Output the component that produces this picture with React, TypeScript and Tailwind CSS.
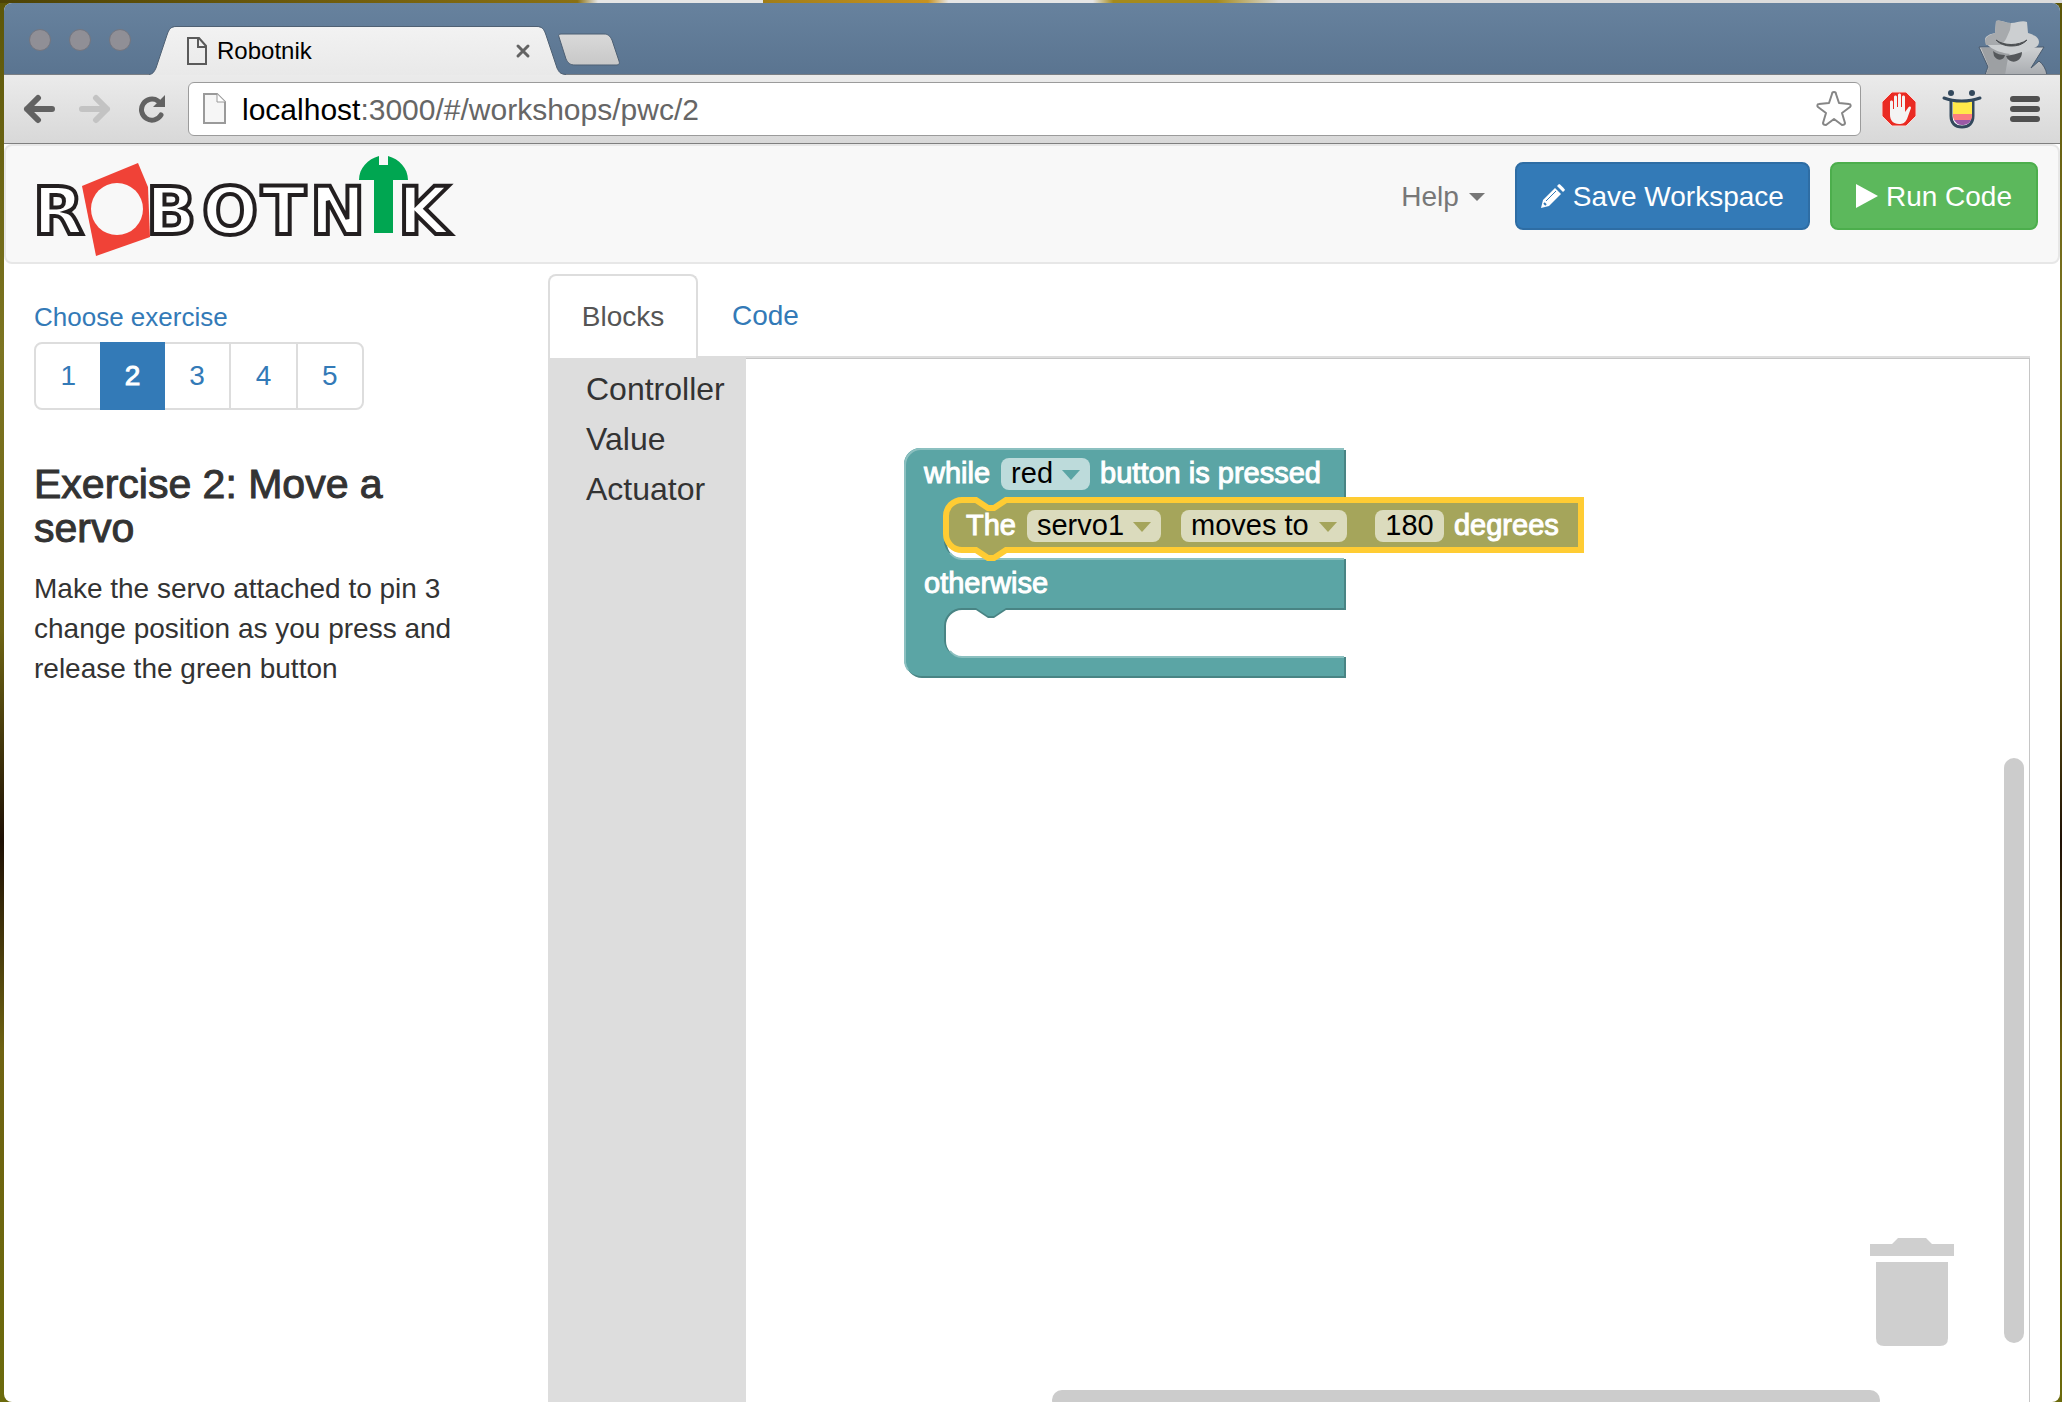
import type { ReactNode } from "react";

const categories = ["Controller", "Value", "Actuator"];
const exercises = [1, 2, 3, 4, 5];

function TabStrip() {
  return (
    <div className="relative flex h-[72px] shrink-0 items-end bg-gradient-to-b from-[#67829e] to-[#5a7490] pl-[25px]">
      <div className="absolute inset-x-0 bottom-0 h-px bg-[#7a7f85]" />
      <div className="flex gap-[18px] self-start pt-[26px]">
        {["Close", "Minimize", "Zoom"].map((name) => (
          <button
            key={name}
            aria-label={name}
            className="size-[22px] rounded-full border border-[#73757f] bg-[#908f96]"
          />
        ))}
      </div>
      <div className="relative ml-[18px] flex h-[49px] w-[418px] items-center pl-[38px] pr-9">
        <svg className="absolute inset-0" width="418" height="49" viewBox="0 0 418 49">
          <defs>
            <linearGradient id="tab" x1="0" y1="0" x2="0" y2="1">
              <stop offset="0" stopColor="#f2f2f2" />
              <stop offset="1" stopColor="#e9e9e9" />
            </linearGradient>
          </defs>
          <path
            d="M0 49C4 48 5 46 7 42L18 9C20 3 22 1 27 1H388C393 1 395 3 397 9L408 42C410 46 411 48 417 49Z"
            fill="url(#tab)"
          />
          <path
            d="M0 48.500C4 48 5 46 7 42L18 9C20 3 22 .5 27 .5H388C393 .5 395 3 397 9L408 42C410 46 411 48 417 48.500"
            fill="none"
            stroke="#4f6073"
          />
        </svg>
        <svg className="relative" width="20" height="28" viewBox="0 0 20 28" fill="none" stroke="#5a5a5a" strokeWidth="2">
          <path d="M1 1H12L19 9V27H1Z" />
          <path d="M11 1V10H19" />
        </svg>
        <span className="relative ml-[10px] flex-1 text-2xl leading-7 text-black">Robotnik</span>
        <button aria-label="Close tab" className="relative">
          <svg width="16" height="16" viewBox="0 0 16 16" stroke="#636363" strokeWidth="3" strokeLinecap="round">
            <path d="M3 3L13 13M13 3L3 13" />
          </svg>
        </button>
      </div>
      <button aria-label="New tab" className="relative -ml-[9px] mb-[9px]">
        <svg width="63" height="33" viewBox="0 0 63 33">
          <defs>
            <linearGradient id="newtab" x1="0" y1="0" x2="0" y2="1">
              <stop offset="0" stopColor="#d9d9d9" />
              <stop offset="1" stopColor="#c8c8c8" />
            </linearGradient>
          </defs>
          <path
            d="M3 1H46C50 1 52 3 54 7L61 28C62 30 61 32 59 32H17C12 32 10 30 8 26L1 4C0 2 1 1 3 1Z"
            fill="url(#newtab)"
            stroke="#4d5f73"
          />
        </svg>
      </button>
      <svg className="ml-auto mr-[12px]" width="70" height="57" viewBox="0 0 70 57">
        <defs>
          <linearGradient id="coat" x1="0" y1="0" x2="0" y2="1">
            <stop offset="0" stopColor="#cfd1d3" />
            <stop offset="1" stopColor="#a9acb0" />
          </linearGradient>
        </defs>
        <path
          d="M1 29L10 29L56 29L66 29L53 50L61 43C65 46 68 51 69 57H7C8 54 9 51 10 49Z"
          fill="url(#coat)"
          stroke="#4a5a6c"
        />
        <path d="M3 30H34L30 40L27 57H8L11 49Z" fill="#9da0a3" />
        <path
          d="M18 3C22 1 27 5 33 5C39 5 44 2 49 4L50 15C56 17 61 19 61 24C61 27 59 29 56 30C50 34 43 36 35 36C24 36 8 30 7 22C7 18 12 16 17 15Z"
          fill="#cccfd1"
        />
        <path d="M18 3C22 1 27 5 33 5L32 12L28 21L24 27L8 27C6 22 7 18 17 15Z" fill="#a7aaad" />
        <path d="M18 22C26 28 40 28 49 22C44 27 39 28 33 28C27 28 22 26 18 22Z" fill="#4c4f52" stroke="#4c4f52" />
        <path d="M15 33C19 36 23 37 27 37C26 43 19 43 16 38ZM28 38C33 37 39 36 44 34C44 45 31 47 28 38Z" fill="#55585b" />
      </svg>
    </div>
  );
}

function Toolbar() {
  return (
    <div className="flex h-[69px] shrink-0 items-center border-b border-[#7f7f7f] bg-gradient-to-b from-[#ebebeb] to-[#d8d8d8] pb-px pl-[18px] pr-5">
      <button aria-label="Back">
        <svg width="34" height="30" viewBox="0 0 34 30" fill="none" stroke="#626262" strokeWidth="6" strokeLinecap="round" strokeLinejoin="round">
          <path d="M5 15H30M16 4L5 15L16 26" />
        </svg>
      </button>
      <button aria-label="Forward" className="ml-[22px]">
        <svg width="34" height="30" viewBox="0 0 34 30" fill="none" stroke="#c3c3c3" strokeWidth="6" strokeLinecap="round" strokeLinejoin="round">
          <path d="M4 15H29M18 4L29 15L18 26" />
        </svg>
      </button>
      <button aria-label="Reload" className="ml-[26px]">
        <svg width="28" height="28" viewBox="0 0 28 28">
          <path d="M23 20A10.500 10.500 0 1 1 20 6" fill="none" stroke="#626262" strokeWidth="5" strokeLinecap="round" />
          <path d="M27 0V12H15Z" fill="#626262" />
        </svg>
      </button>
      <div className="ml-[22px] flex h-[54px] flex-1 items-center rounded-md border border-[#9b9b9b] bg-white pl-[14px] pr-[7px]">
        <svg width="24" height="32" viewBox="0 0 24 32">
          <path d="M1 1H14L22 9V30H1Z" fill="#f6f6f6" stroke="#9a9a9a" strokeWidth="2" />
          <path d="M14 1V9H22" fill="#fff" stroke="#9a9a9a" />
        </svg>
        <div className="ml-[15px] flex-1 pt-[2px] text-[30px] leading-9 text-[#666]">
          <span className="text-black">localhost</span>:3000/#/workshops/pwc/2
        </div>
        <button aria-label="Bookmark this page">
          <svg width="38" height="38" viewBox="0 0 38 38" fill="#fff" stroke="#868686" strokeWidth="2" strokeLinejoin="round">
            <path d="M19 2C20 2 21 3 21 4L24 13L34 14C36 14 36 16 35 17L27 23L30 33C30 35 28 35 27 35L19 29L11 35C10 35 8 35 8 33L11 23L3 17C2 16 2 14 4 14L14 13L17 4C17 3 18 2 19 2Z" />
          </svg>
        </button>
      </div>
      <button aria-label="Ad blocker" className="ml-5">
        <svg width="36" height="36" viewBox="0 0 36 36">
          <path d="M11 1H25L35 11V25L25 35H11L1 25V11Z" fill="#ea2a22" stroke="#f7d9d6" />
          <path
            d="M9 11C9 9 12 9 12 11V18H13V6C13 4 16 4 16 6V16H17V4C17 2 20 2 20 4V16H21V6C21 4 24 4 24 6V21L27 17C28 15 30 15 30 17L26 28C24 32 22 33 18 33C12 33 9 29 9 24Z"
            fill="#f4f4f4"
          />
        </svg>
      </button>
      <button aria-label="Extension" className="ml-[25px]">
        <svg width="40" height="40" viewBox="0 0 40 40">
          <circle cx="9" cy="4" r="3" fill="#33495d" />
          <circle cx="30" cy="4" r="3" fill="#33495d" />
          <path d="M9 12V27C9 34 13 38 20 38C27 38 31 34 31 27V12" fill="#fff" stroke="#33495d" strokeWidth="3" />
          <path d="M11 13H30V25H11Z" fill="#ffe94a" />
          <path d="M11 25H30V28L29 31H12L11 28Z" fill="#fb7d7f" />
          <path d="M12 31H29C27 35 24 36 20 36C16 36 14 34 12 31Z" fill="#9b59a6" />
          <path d="M2 9C12 13 27 13 38 9" fill="none" stroke="#33495d" strokeWidth="3" strokeLinecap="round" />
        </svg>
      </button>
      <button aria-label="Menu" className="ml-[28px] flex flex-col gap-1">
        <span className="h-[6px] w-[30px] rounded-full bg-[#505050]" />
        <span className="h-[6px] w-[30px] rounded-full bg-[#505050]" />
        <span className="h-[6px] w-[30px] rounded-full bg-[#505050]" />
      </button>
    </div>
  );
}

function Logo() {
  return (
    <svg width="432" height="102" viewBox="-6 0 432 102" role="img" aria-label="Robotnik">
      <path d="M102 8L46 31L60 101L114 82L112 32Z" fill="#f04237" />
      <g
        fill="#fff"
        stroke="#231f20"
        strokeWidth="4"
        fontFamily="'DejaVu Sans', sans-serif"
        fontWeight="700"
        fontSize="66"
      >
        <text x="-3" y="79">R</text>
        <text x="110" y="79">B</text>
        <text x="166" y="79">O</text>
        <text x="225" y="79">T</text>
        <text x="274" y="79">N</text>
        <text x="362" y="79">K</text>
      </g>
      <circle cx="81" cy="54" r="26" fill="#f8f8f8" />
      <path d="M343 1V10H352V1C363 4 372 13 372 25H357V78H338V25H323C323 13 332 4 343 1Z" fill="#00a651" />
    </svg>
  );
}

function Navbar() {
  return (
    <header className="flex h-[120px] shrink-0 items-start rounded-lg border-2 border-[#e7e7e7] bg-[#f8f8f8] pl-6 pr-5 text-[28px] leading-10">
      <a href="#home" className="mt-[9px]">
        <Logo />
      </a>
      <nav className="ml-auto mt-4 flex items-center">
        <button className="mr-[30px] flex items-center gap-[10px] pt-[2px] text-[#777]">
          Help
          <svg width="16" height="8" viewBox="0 0 16 8" fill="#777">
            <path d="M0 0H16L8 8Z" />
          </svg>
        </button>
        <button className="flex h-[68px] items-center gap-2 rounded-lg border-2 border-[#2e6da4] bg-[#337ab7] px-6 text-white">
          <svg width="24" height="24" viewBox="0 0 24 24" fill="#fff">
            <path d="M14 4L20 10L8 22L0 24L2 16Z" />
            <path d="M16 2L18 0C19 0 24 5 24 6L22 8Z" />
            <path d="M5 17L15 7" stroke="#337ab7" />
            <path d="M3 19L5 21" stroke="#337ab7" strokeWidth="2" />
          </svg>
          <span className="pt-[2px]">Save Workspace</span>
        </button>
        <button className="ml-5 flex h-[68px] items-center gap-2 rounded-lg border-2 border-[#4cae4c] bg-[#5cb85c] px-6 text-white">
          <svg width="22" height="24" viewBox="0 0 22 24" fill="#fff">
            <path d="M0 0L22 12L0 24Z" />
          </svg>
          <span className="pt-[2px]">Run Code</span>
        </button>
      </nav>
    </header>
  );
}

function ExercisePanel() {
  return (
    <aside className="w-[544px] shrink-0 pl-[30px] pr-[70px] pt-[33px] text-[28px] leading-10 text-[#333]">
      <h2 className="text-[26px] text-[#337ab7]">Choose exercise</h2>
      <nav aria-label="Exercises" className="mt-[5px] flex w-[330px] text-[#337ab7]">
        {exercises.map((n) =>
          n === 2 ? (
            <a
              key={n}
              href={`#exercise-${n}`}
              aria-current="page"
              className="relative -ml-[2px] flex h-[68px] flex-1 items-center justify-center bg-[#337ab7] text-white [-webkit-text-stroke:1px_#fff]"
            >
              {n}
            </a>
          ) : (
            <a
              key={n}
              href={`#exercise-${n}`}
              className="-ml-[2px] flex h-[68px] flex-1 items-center justify-center border-2 border-[#ddd] bg-white first:ml-0 first:rounded-l-lg last:rounded-r-lg"
            >
              {n}
            </a>
          ),
        )}
      </nav>
      <h1 className="mt-[52px] text-[41px] leading-[44px] [-webkit-text-stroke:1px_#333]">Exercise 2: Move a servo</h1>
      <p className="mt-[19px]">Make the servo attached to pin 3 change position as you press and release the green button</p>
    </aside>
  );
}

function Label({ children }: { children: ReactNode }) {
  return <span className="whitespace-nowrap text-white [-webkit-text-stroke:1px_#fff]">{children}</span>;
}

function Caret({ color }: { color: string }) {
  return (
    <svg className="pointer-events-none absolute right-[10px] top-3" width="18" height="10" viewBox="0 0 18 10" fill={color}>
      <path d="M0 0H18L9 10Z" />
    </svg>
  );
}

function Blocks() {
  return (
    <div className="absolute left-[154px] top-[81px] h-[250px] w-[700px] text-[29px] leading-[30px] text-black">
      <svg className="absolute inset-0" width="700" height="250" viewBox="0 0 700 250">
        <path
          d="M6 26a16 16 0 0 1 16-16H446V61H107l-12 8h-6l-12-8h-14a16 16 0 0 0-16 16V103a16 16 0 0 0 16 16H446V170H106l-12 8h-6l-12-8h-14a16 16 0 0 0-16 16V201a16 16 0 0 0 16 16H446V238H22a16 16 0 0 1-16-16Z"
          fill="#498484"
        />
        <path
          d="M4 24a16 16 0 0 1 16-16H444V58H106l-12 8h-6l-12-8h-14a18 18 0 0 0-18 18V102a18 18 0 0 0 18 16H444V168H106l-12 8h-6l-12-8h-14a18 18 0 0 0-18 18V201a18 18 0 0 0 18 16H444V236H22a17 17 0 0 1-18-16Z"
          fill="#5ba5a5"
        />
        <path
          d="M8 230A16 16 0 0 1 5 222V25A16 16 0 0 1 21 9H444M50 113A16 16 0 0 0 62 119H444M50 211A16 16 0 0 0 62 217H444"
          fill="none"
          stroke="#8cc0c0"
          strokeWidth="2"
        />
        <path
          d="M46 76a16 16 0 0 1 16-16h14l12 8h6l12-8H681V110H106l-12 8h-6l-12-8h-14a16 16 0 0 1-16-16Z"
          fill="#a5a55b"
          stroke="#ffcc33"
          strokeWidth="6"
        />
      </svg>
      <div className="absolute left-6 top-[18px] flex items-start gap-[10px]">
        <Label>while</Label>
        <span className="relative ml-px">
          <select
            aria-label="Button colour"
            className="block h-8 w-[89px] appearance-none rounded-lg bg-[#bddbdb] pb-[2px] pl-[10px] leading-[30px]"
          >
            <option>red</option>
          </select>
          <Caret color="#5ba5a5" />
        </span>
        <Label>button is pressed</Label>
      </div>
      <div className="absolute left-[66px] top-[70px] flex items-start gap-[10px]">
        <Label>The</Label>
        <span className="relative ml-px">
          <select
            aria-label="Servo"
            className="block h-8 w-[134px] appearance-none rounded-lg bg-[#dbdbbd] pb-[2px] pl-[10px] leading-[30px]"
          >
            <option>servo1</option>
          </select>
          <Caret color="#a5a55b" />
        </span>
        <span className="relative ml-[10px]">
          <select
            aria-label="Action"
            className="block h-8 w-[166px] appearance-none rounded-lg bg-[#dbdbbd] pb-[2px] pl-[10px] leading-[30px]"
          >
            <option>moves to</option>
          </select>
          <Caret color="#a5a55b" />
        </span>
        <input
          aria-label="Degrees"
          defaultValue="180"
          className="ml-[18px] h-8 w-[69px] rounded-lg bg-[#dbdbbd] pb-[2px] text-center leading-[30px]"
        />
        <Label>degrees</Label>
      </div>
      <div className="absolute left-6 top-[128px]">
        <Label>otherwise</Label>
      </div>
    </div>
  );
}

function Editor() {
  return (
    <section className="flex min-w-0 flex-1 flex-col pr-[30px] pt-[10px]">
      <div role="tablist" className="flex h-[84px] shrink-0 border-b-2 border-[#ddd] text-[28px] leading-10">
        <button
          role="tab"
          aria-selected="true"
          className="relative -mb-[2px] w-[150px] rounded-t-lg border-2 border-b-0 border-[#ddd] bg-white text-[#555]"
        >
          Blocks
        </button>
        <button role="tab" aria-selected="false" className="px-[34px] pt-[2px] text-[#337ab7]">
          Code
        </button>
      </div>
      <div className="flex min-h-0 flex-1">
        <ul className="w-[198px] shrink-0 bg-[#ddd] pt-[6px] text-[32px] leading-[50px] text-[#333]">
          {categories.map((name) => (
            <li key={name}>
              <button className="block pl-[38px]">{name}</button>
            </li>
          ))}
        </ul>
        <div className="relative min-w-0 flex-1 overflow-hidden border-r border-t border-[#c6c6c6] bg-white">
          <Blocks />
          <svg className="absolute bottom-[56px] right-[74px]" width="86" height="110" viewBox="0 0 86 110" fill="#cfcfcf">
            <path d="M1 8H23L29 2H57L63 8H85V20H1Z" />
            <path d="M7 26H79V102Q79 110 71 110H15Q7 110 7 102Z" />
          </svg>
          <div className="absolute bottom-[59px] right-[5px] top-[399px] w-5 rounded-full bg-[#ccc]" />
          <div className="absolute -bottom-2 left-[306px] right-[149px] h-5 rounded-full bg-[#ccc]" />
        </div>
      </div>
    </section>
  );
}

export default function App() {
  return (
    <div className="h-screen overflow-hidden bg-[linear-gradient(180deg,#5c5608_0%,#7d7522_25%,#6e6414_45%,#1e1005_60%,#6f6312_75%,#6b6a0c_100%)] font-['Liberation_Sans',Arial,sans-serif]">
      <div className="flex h-full flex-col bg-[linear-gradient(90deg,#4d4305_0%,#8a7012_28%,#e6e6e6_29%,#e6e6e6_37%,#a07d18_37%,#c79220_45%,#e6e6e6_46%,#e6e6e6_53%,#a58a1c_54%,#a58a1c_59%,#dcdcdc_62%,#dcdcdc_100%)] bg-[length:100%_3px] bg-no-repeat pl-1 pr-[2px] pt-[3px]">
        <div className="flex min-h-0 flex-1 flex-col overflow-hidden rounded-lg bg-white">
          <TabStrip />
          <Toolbar />
          <Navbar />
          <main className="flex min-h-0 flex-1">
            <ExercisePanel />
            <Editor />
          </main>
        </div>
      </div>
    </div>
  );
}
